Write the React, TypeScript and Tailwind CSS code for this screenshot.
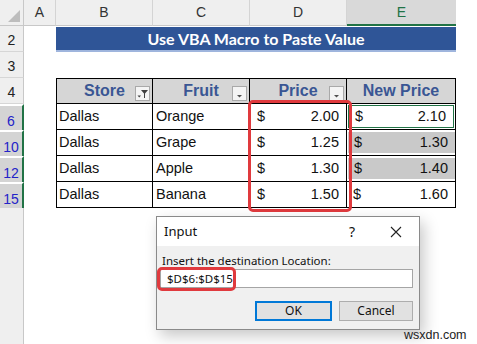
import React from 'react'

const rows = [
  { n: '6', fruit: 'Orange', price: '2.00', next: '2.10', state: 'active' },
  { n: '10', fruit: 'Grape', price: '1.25', next: '1.30', state: 'sel' },
  { n: '12', fruit: 'Apple', price: '1.30', next: '1.40', state: 'sel' },
  { n: '15', fruit: 'Banana', price: '1.50', next: '1.60', state: 'none' }
]

function FilterBtn({ funnel }: { funnel?: boolean }) {
  return (
    <div className="absolute right-[2px] top-[7px] w-[15px] h-[15px] border border-[#a9a9a9] bg-[#f4f4f4]">
      <svg width="13" height="13" viewBox="0 0 13 13">
        {funnel ? (
          <>
            <polygon points="5,3 12,3 9,6.5 9,11 8,11 8,6.5" fill="#404040" />
            <polygon points="1.5,8.5 5,8.5 3.25,10.5" fill="#404040" />
          </>
        ) : (
          <polygon points="4,8 9,8 6.5,10.5" fill="#505050" />
        )}
      </svg>
    </div>
  )
}

function RowHead({ label, sel }: { label: string; sel?: boolean }) {
  return sel ? (
    <div className="w-[24px] h-[26px] shrink-0 bg-[#d4d4d4] border-t-2 border-t-white border-r-2 border-r-[#217346] flex items-end justify-center pb-[2px] text-[14px] leading-none text-[#2323c8]">
      {label}
    </div>
  ) : (
    <div className="w-[24px] h-[26px] shrink-0 bg-[#efefef] border-b border-b-[#d6d6d6] border-r border-r-[#c8c8c8] flex items-end justify-center pb-[4px] text-[14px] leading-none text-[#222]">
      {label}
    </div>
  )
}

export default function App() {
  return (
    <div
      className="relative w-[477px] h-[344px] overflow-hidden bg-white flex flex-col"
      style={{ fontFamily: '"Liberation Sans", Arial, sans-serif' }}
    >
      {/* column letters */}
      <div className="flex h-[26px] shrink-0 text-[14px] text-[#333]">
        <div className="w-[24px] bg-[#efefef] border-r border-r-[#c8c8c8] border-b border-b-[#c8c8c8] relative">
          <svg className="absolute left-0 top-0" width="24" height="26" viewBox="0 0 24 26">
            <polygon points="8,22 20,22 20,10" fill="#bdbdbd" />
          </svg>
        </div>
        {['A', 'B', 'C', 'D'].map((c, i) => (
          <div
            key={c}
            className={`${i === 0 ? 'w-[32px]' : 'w-[97px]'} bg-[#efefef] border-r border-r-[#d4d4d4] border-b border-b-[#c8c8c8] flex items-center justify-center`}
          >
            {c}
          </div>
        ))}
        <div className="w-[109px] bg-[#d9d9d9] border-b-2 border-b-[#217346] flex items-center justify-center text-[#217346]">
          E
        </div>
        <div className="flex-1" />
      </div>

      {/* row 2 title */}
      <div className="flex h-[26px] shrink-0">
        <RowHead label="2" />
        <div className="w-[32px]" />
        <div className="w-[400px] flex flex-col pt-[1px]">
          <div
            className="h-[23px] bg-[#2f5597] flex items-center justify-center text-white font-bold text-[16px]"
            style={{ fontFamily: 'Lato, "Liberation Sans", sans-serif' }}
          >
            Use VBA Macro to Paste Value
          </div>
          <div className="h-[2px] bg-[#9fb5dd]" />
        </div>
      </div>

      {/* row 3 */}
      <div className="flex h-[26px] shrink-0">
        <RowHead label="3" />
      </div>

      {/* row 4 table header */}
      <div className="flex h-[26px] shrink-0">
        <RowHead label="4" />
        <div className="w-[32px]" />
        <div className="w-[400px] flex border border-black bg-[#d6d6d6] text-[16px] font-bold text-[#3a5694]">
          <div className="relative w-[96px] border-r border-black flex items-center justify-center">
            Store
            <FilterBtn funnel />
          </div>
          <div className="relative w-[97px] border-r border-black flex items-center justify-center">
            Fruit
            <FilterBtn />
          </div>
          <div className="relative w-[97px] border-r border-black flex items-center justify-center">
            Price
            <FilterBtn />
          </div>
          <div className="flex-1 flex items-center justify-center">New Price</div>
        </div>
      </div>

      {/* data rows */}
      {rows.map((r) => (
        <div key={r.n} className="flex h-[26px] shrink-0">
          <RowHead label={r.n} sel />
          <div className="w-[32px]" />
          <div className="w-[400px] flex border-x border-b border-black text-[14.5px] text-[#111]">
            <div className="w-[96px] border-r border-black flex items-center pl-[2px]">Dallas</div>
            <div className="w-[97px] border-r border-black flex items-center pl-[3px]">{r.fruit}</div>
            <div className="w-[97px] border-r border-black flex items-center justify-between pl-[7px] pr-[7px]">
              <span>$</span>
              <span>{r.price}</span>
            </div>
            <div
              className={`flex-1 flex items-center justify-between pl-[6px] pr-[7px] ${
                r.state === 'active'
                  ? 'border border-[#217346] m-[1px] pl-[5px] pr-[6px]'
                  : r.state === 'sel'
                    ? 'bg-[#c9c9c9] my-[2px] ml-[1px]'
                    : ''
              }`}
            >
              <span>$</span>
              <span>{r.next}</span>
            </div>
          </div>
        </div>
      ))}

      {/* empty rows below */}
      <div className="flex flex-1">
        <div className="w-[24px] bg-[#efefef] border-r border-r-[#c8c8c8]" />
      </div>

      {/* highlight around D6:D15 */}
      <div className="absolute left-[248px] top-[100px] w-[104px] h-[112px] border-[3px] border-[#e03a3e] rounded-[5px]" />

      {/* input dialog */}
      <div
        className="absolute left-[156px] top-[216px] w-[264px] h-[114px] border border-[#8a8a8a] bg-[#f0f0f0] flex flex-col shadow-[4px_6px_14px_rgba(0,0,0,0.22)]"
        style={{ fontFamily: '"Noto Sans", "Open Sans", sans-serif' }}
      >
        <div className="h-[29px] bg-white flex items-center pl-[7px] pr-[17px] text-[13px] text-[#111]">
          <span>Input</span>
          <span className="ml-auto mr-[35px] text-[14px]">?</span>
          <svg width="12" height="12" viewBox="0 0 12 12">
            <path d="M1 1 L11 11 M11 1 L1 11" stroke="#222" strokeWidth="1.1" />
          </svg>
        </div>
        <div className="flex-1 flex flex-col px-[3px] pt-[7px]">
          <div className="pl-[2px] text-[11.5px] leading-[15px] text-[#111]">Insert the destination Location:</div>
          <div className="mt-[1px] h-[19px] w-[253px] bg-white border border-[#a5a5a5] flex items-center pl-[6px] text-[11.5px] text-[#111]">
            $D$6:$D$15
          </div>
          <div className="mt-[13px] flex justify-end gap-[7px] pr-[3px] text-[12px] text-[#111]">
            <div className="w-[77px] h-[20px] border-2 border-[#0078d7] bg-[#e1e1e1] flex items-center justify-center">OK</div>
            <div className="w-[74px] h-[20px] border border-[#adadad] bg-[#e1e1e1] flex items-center justify-center">Cancel</div>
          </div>
        </div>
      </div>

      {/* highlight around the input value */}
      <div className="absolute left-[157px] top-[267px] w-[79px] h-[24px] border-[3px] border-[#e03a3e] rounded-[5px]" />

      <div className="absolute left-[404px] top-[326px] text-[12.5px] text-[#222]">wsxdn.com</div>
    </div>
  )
}
